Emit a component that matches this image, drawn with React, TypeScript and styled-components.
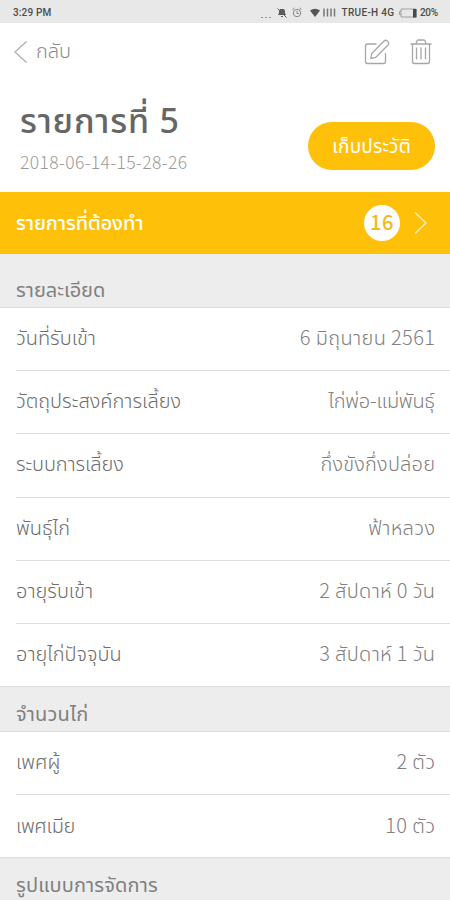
import React from "react";
import styled, { createGlobalStyle } from "styled-components";

const family = `"Noto Sans CJK JP", "Noto Sans Thai", "Noto Sans", sans-serif`;

const GlobalStyle = createGlobalStyle`
  * { box-sizing: border-box; }
  body { margin: 0; background: #fff; font-family: ${family}; }
`;

const Screen = styled.main`
  width: 450px;
  height: 900px;
  overflow: hidden;
  background: #fff;
  color: #808080;
`;

const StatusBar = styled.header`
  height: 23px;
  padding: 3px 12px 0 13px;
  display: flex;
  align-items: center;
  justify-content: space-between;
  background: #e8e8e8;
  color: #4c4c4c;
  font: 500 10px/20px Roboto, sans-serif;
`;

const StatusGroup = styled.div`
  display: flex;
  align-items: center;
`;

const Label = styled.span<{ $spacing?: number }>`
  white-space: nowrap;
  letter-spacing: ${(p) => p.$spacing ?? 0}px;
  margin-right: ${(p) => -(p.$spacing ?? 0)}px;
`;

const NavBar = styled.nav`
  height: 57px;
  padding: 0 18px 0 14px;
  display: flex;
  align-items: center;
  justify-content: space-between;
`;

const BackButton = styled.button`
  display: flex;
  align-items: center;
  gap: 9px;
  padding: 0;
  border: 0;
  background: none;
  color: #8c8c8c;
  font: 300 20px/28px ${family};
  ${Label} { padding-bottom: 4px; }
`;

const Actions = styled.div`
  display: flex;
  gap: 20px;
  color: #a6a6a6;
`;

const Heading = styled.section`
  height: 112px;
  padding: 17px 15px 0 20px;
  display: flex;
  justify-content: space-between;
`;

const Title = styled.h1`
  margin: 0;
  color: #666;
  font-family: "Noto Sans", "Noto Sans Thai", sans-serif;
  font-size: 34px;
  line-height: 46px;
  font-weight: 500;
`;

const Stamp = styled.div`
  margin-top: 6px;
  color: #999;
  font-size: 17.5px;
  line-height: 26px;
  font-weight: 300;
`;

const PillButton = styled.button`
  width: 127px;
  height: 48px;
  margin-top: 25px;
  padding: 0 0 2px;
  border: 0;
  border-radius: 24px;
  background: #ffc00a;
  color: #fff;
  font: 400 19px/28px ${family};
`;

const TodoBar = styled.div`
  height: 62px;
  padding: 0 23px 0 16px;
  display: flex;
  align-items: center;
  justify-content: space-between;
  background: #ffc00a;
  color: #fff;
  font-size: 20px;
  font-weight: 500;
`;

const TodoEnd = styled.div`
  display: flex;
  align-items: center;
  gap: 14px;
`;

const Count = styled.span`
  width: 36px;
  height: 36px;
  border-radius: 50%;
  background: #fff;
  color: #f5b81c;
  font-size: 20px;
  line-height: 34px;
  font-weight: 500;
  text-align: center;
  letter-spacing: 0.6px;
`;

const SectionHeader = styled.h2<{ $height: number; $rule?: boolean }>`
  height: ${(p) => p.$height}px;
  margin: 0;
  padding: 0 16px 2px;
  display: flex;
  align-items: flex-end;
  background: #ededed;
  border-top: ${(p) => (p.$rule ? "1px solid #dedede" : "0")};
  border-bottom: 1px solid #dcdcdc;
  color: #808080;
  font-size: 20px;
  line-height: 32px;
  font-weight: 400;
`;

const List = styled.dl`
  margin: 0;
  padding-left: 16px;
`;

const Row = styled.div`
  height: 63.2px;
  padding: 0 15px 4px 0;
  display: flex;
  align-items: center;
  justify-content: space-between;
  border-bottom: 1px solid #dedede;
  font-size: 20px;
  line-height: 30px;
  font-weight: 300;
  &:last-child { height: 62px; border-bottom: 0; padding-bottom: 3px; }
`;

const Term = styled.dt`
  color: #6e6e6e;
`;

const Value = styled.dd`
  margin: 0;
  color: #808080;
`;

type Item = { term: string; value: string; ts?: number; vs?: number };

const details: Item[] = [
  { term: "วันที่รับเข้า", value: "6 มิถุนายน 2561", vs: 0.38 },
  { term: "วัตถุประสงค์การเลี้ยง", value: "ไก่พ่อ-แม่พันธุ์", vs: -0.25 },
  { term: "ระบบการเลี้ยง", value: "กึ่งขังกึ่งปล่อย", ts: -0.1, vs: 0.2 },
  { term: "พันธุ์ไก่", value: "ฟ้าหลวง", vs: 0.35 },
  { term: "อายุรับเข้า", value: "2 สัปดาห์ 0 วัน", vs: 0.35 },
  { term: "อายุไก่ปัจจุบัน", value: "3 สัปดาห์ 1 วัน", vs: 0.35 },
];

const amounts: Item[] = [
  { term: "เพศผู้", value: "2 ตัว", vs: 0.35 },
  { term: "เพศเมีย", value: "10 ตัว", ts: -0.35, vs: 0.4 },
];

const Rows = ({ items }: { items: Item[] }) => (
  <List>
    {items.map((i) => (
      <Row key={i.term}>
        <Term><Label $spacing={i.ts}>{i.term}</Label></Term>
        <Value><Label $spacing={i.vs}>{i.value}</Label></Value>
      </Row>
    ))}
  </List>
);

const StatusIcons = () => (
  <svg width="82" height="14" viewBox="0 0 82 14" fill="none" stroke="#5c5c5c">
    <path d="M1 11.500h2M5 11.500h2M9 11.500h2" stroke="#999" />
    <path d="M18 9h8l-1-2V5l-1-2h-4l-1 2v2zM21 10h2v1h-2z" fill="#5c5c5c" stroke="none" />
    <path d="M17.5 2.5l9 9" />
    <circle cx="37" cy="7" r="3.7" stroke="#888" />
    <path d="M37 5v2.500h2M32.500 3.500l2-1.500M41.500 3.500l-2-1.500" stroke="#888" />
    <path d="M50 4.500q5-3.500 10 0L55 11z" fill="#555" stroke="none" />
    <path d="M64 2.500v8M67.500 2.500v8M71 2.500v8M74.500 2.500v8" stroke="#777" strokeWidth="1.500" />
  </svg>
);

const Battery = () => (
  <svg width="26" height="12" viewBox="-4 0 26 12">
    <path d="M3 2h15v8H3zM3 4.500H1.500v3H3" fill="none" stroke="#a0a0a0" />
    <path d="M15 2h3.500v8.500H15z" fill="#4a4a4a" />
  </svg>
);

const Chevron = ({ left }: { left?: boolean }) => (
  <svg
    width="13"
    height="24"
    viewBox="0 0 13 24"
    fill="none"
    stroke={left ? "#b0b0b0" : "#fff0c4"}
    strokeWidth="1.300"
  >
    <path d={left ? "M12.500 1.500L1 12l11.500 10.500" : "M1 1.500L12 12L1 22.500"} />
  </svg>
);

const EditIcon = () => (
  <svg width="26" height="26" viewBox="0 0 26 26" fill="none" stroke="currentColor" strokeWidth="1.300">
    <path d="M12.500 5H3.500Q1.500 5 1.500 7v15.500q0 2 2 2h16q2 0 2-2V14" />
    <path d="M6.800 19.500l.9-5L20 2q1.700-1.500 3.600.2t.4 3.800L11.700 18.500z" />
  </svg>
);

const TrashIcon = () => (
  <svg width="22" height="26" viewBox="0 0 22 26" fill="none" stroke="currentColor" strokeWidth="1.300">
    <path d="M.5 5h21M6 5l.7-2.500Q7.100 1 8.500 1h5q1.400 0 1.800 1.500L16 5M2.500 5v17.500q0 2 2 2h13q2 0 2-2V5M6.500 8.500v12M11 8.500v12M15.500 8.500v12" />
  </svg>
);

export default function App() {
  return (
    <>
      <GlobalStyle />
      <Screen>
        <StatusBar>
          <Label $spacing={0.15}>3:29 PM</Label>
          <StatusGroup>
            <StatusIcons />
            <Label $spacing={0.3}>TRUE-H 4G</Label>
            <Battery />
            <Label $spacing={-0.4}>20%</Label>
          </StatusGroup>
        </StatusBar>
        <NavBar>
          <BackButton><Chevron left /><Label>กลับ</Label></BackButton>
          <Actions><EditIcon /><TrashIcon /></Actions>
        </NavBar>
        <Heading>
          <div>
            <Title><Label $spacing={0.8}>รายการที่ 5</Label></Title>
            <Stamp><Label $spacing={0.38}>2018-06-14-15-28-26</Label></Stamp>
          </div>
          <PillButton><Label $spacing={0.2}>เก็บประวัติ</Label></PillButton>
        </Heading>
        <TodoBar>
          <Label $spacing={-0.15}>รายการที่ต้องทำ</Label>
          <TodoEnd><Count>16</Count><Chevron /></TodoEnd>
        </TodoBar>
        <SectionHeader $height={54}><Label>รายละเอียด</Label></SectionHeader>
        <Rows items={details} />
        <SectionHeader $height={46} $rule><Label $spacing={0.2}>จำนวนไก่</Label></SectionHeader>
        <Rows items={amounts} />
        <SectionHeader $height={46} $rule><Label $spacing={0.15}>รูปแบบการจัดการ</Label></SectionHeader>
      </Screen>
    </>
  );
}
